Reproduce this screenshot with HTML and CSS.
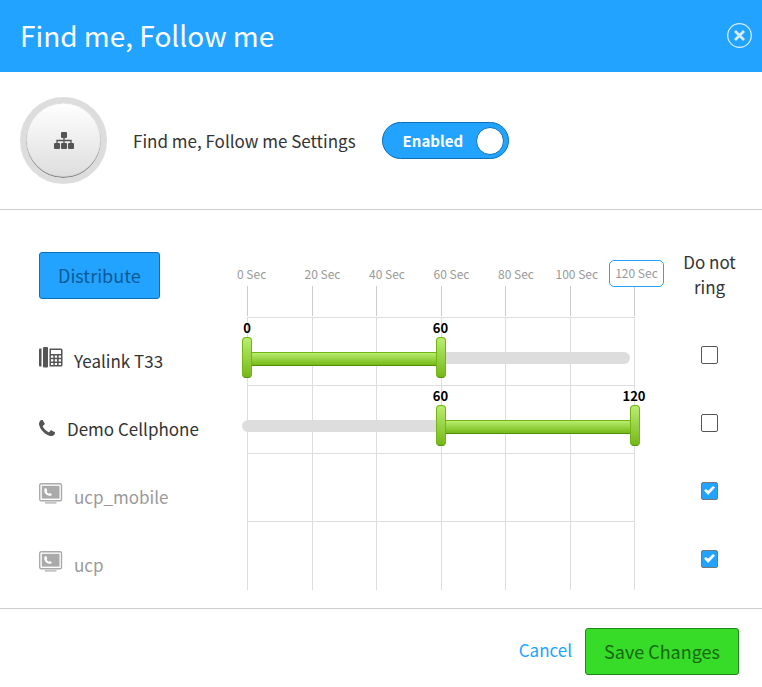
FILE: index.html
```html
<!DOCTYPE html>
<html lang="en">
<head>
<meta charset="utf-8">
<title>Find me, Follow me</title>
<link rel="stylesheet" href="styles.css">
</head>
<body>
<header class="header">
  <h1>Find me, Follow me</h1>
  <button class="close" type="button" aria-label="Close">
    <svg viewBox="0 0 25 25" width="25" height="25"><circle cx="12.500" cy="12.500" r="11.800" fill="none" stroke="#d5edff" stroke-width="1.300"/><path d="M8 8l9 9M17 8l-9 9" stroke="#d5edff" stroke-width="2.800"/></svg>
  </button>
</header>

<section class="settings">
  <div class="badge">
    <svg viewBox="0 0 20 17" width="20" height="17" fill="#555"><rect x="7" y="0" width="6" height="6" rx="1"/><rect x="0" y="11" width="6" height="6" rx="1"/><rect x="7" y="11" width="6" height="6" rx="1"/><rect x="14" y="11" width="6" height="6" rx="1"/><path d="M10 5v7M3 12V8.500h14V12" fill="none" stroke="#555" stroke-width="1.300"/></svg>
  </div>
  <span id="settings-label">Find me, Follow me Settings</span>
  <label class="toggle">
    <input type="checkbox" role="switch" checked aria-labelledby="settings-label">
    <span>Enabled</span>
    <i class="knob"></i>
  </label>
</section>

<main class="main">
  <table class="plan">
    <colgroup><col class="col-name"><col><col class="col-check"></colgroup>
    <thead>
      <tr>
        <th scope="col"><button class="btn btn-blue" type="button">Distribute</button></th>
        <th scope="col">
          <div class="scale">
            <span class="first">0 Sec</span><span>20 Sec</span><span>40 Sec</span><span>60 Sec</span><span>80 Sec</span><span class="wide">100 Sec</span><span class="end"><b>120 Sec</b></span>
          </div>
        </th>
        <th scope="col" class="check-head">Do not ring</th>
      </tr>
    </thead>
    <tbody>
      <tr>
        <th scope="row"><div class="name">
          <svg class="device" viewBox="0 0 24 21" width="24" height="21"><path d="M0 2.500Q0 1.500 1 1.500h1.500v18H1q-1 0-1-1z" fill="#555"/><rect x="4" y="0" width="5" height="20.500" rx="1" fill="#555"/><path d="M10.500 1.500H22q1.500 0 1.500 1.500v15q0 1.500-1.500 1.500H10.500z" fill="#555"/><path d="M12 3h10v4H12zM12 8.500h2.300v2.200H12zm3.800 0h2.300v2.200h-2.300zm3.900 0H22v2.200h-2.300zM12 12.200h2.300v2.200H12zm3.800 0h2.300v2.200h-2.300zm3.900 0H22v2.200h-2.300zM12 15.900h2.300v2.200H12zm3.800 0h2.300v2.200h-2.300zm3.900 0H22v2.200h-2.300z" fill="#fff"/></svg>
          <span>Yealink T33</span></div></th>
        <td><div class="track-cell">
          <i></i><i></i><i></i><i></i><i></i><i></i>
          <div class="rail"></div>
          <div class="fill" style="left:0%;width:50%"></div>
          <input type="range" min="0" max="120" value="0" aria-label="Yealink T33 start">
          <input type="range" min="0" max="120" value="60" aria-label="Yealink T33 end">
          <output style="left:0%">0</output><output style="left:50%">60</output>
        </div></td>
        <td class="check"><input type="checkbox" aria-label="Do not ring Yealink T33"></td>
      </tr>
      <tr>
        <th scope="row"><div class="name">
          <svg class="phone" viewBox="0 0 1408 1408" width="16" height="16" fill="#555"><path d="M1408 1112q0 27-10 70.500t-21 68.500q-21 50-122 106-94 51-186 51-27 0-53-3.500t-57.500-12.500-47-14.500T856 1357t-49-18q-98-35-175-83-127-79-264-216T152 776q-48-77-83-175-3-9-18-49t-20.500-55.500-14.500-47T3.500 392 0 339q0-92 51-186Q107 52 157 31q25-11 68.500-21T296 0q14 0 21 3 18 6 53 76 11 19 30 54t35 63.500 31 53.500q3 4 17.500 25t21.500 35.500 7 28.500q0 20-28.500 50t-62 55-62 53-28.500 46q0 9 5 22.500t8.500 20.500 14 24 11.500 19q76 137 174 235t235 174q2 1 19 11.500t24 14 20.500 8.500 22.500 5q18 0 46-28.500t53-62 55-62 50-28.500q14 0 28.500 7t35.500 21.500 25 17.500q25 15 53.500 31t63.500 35 54 30q70 35 76 53 3 7 3 21z"/></svg>
          <span>Demo Cellphone</span></div></th>
        <td><div class="track-cell">
          <i></i><i></i><i></i><i></i><i></i><i></i>
          <div class="rail"></div>
          <div class="fill" style="left:50%;width:50%"></div>
          <input type="range" min="0" max="120" value="60" aria-label="Demo Cellphone start">
          <input type="range" min="0" max="120" value="120" aria-label="Demo Cellphone end">
          <output style="left:50%">60</output><output style="left:100%">120</output>
        </div></td>
        <td class="check"><input type="checkbox" aria-label="Do not ring Demo Cellphone"></td>
      </tr>
      <tr class="off">
        <th scope="row"><div class="name">
          <svg class="device" viewBox="0 0 24 21" width="24" height="21"><rect x=".7" y=".7" width="21.800" height="17" rx="1.500" fill="#fff" stroke="#aaa" stroke-width="1.400"/><rect x="2.800" y="2.800" width="17.700" height="12.800" fill="#aaa"/><rect x="6" y="19.300" width="11.500" height="1.200" fill="#aaa"/><path d="M5.500 5.500q-1 4 2 6.300 2.600 1.600 5 .7l.2-1.500-2-1-1.200.8q-1.300-.6-1.900-2.200l.7-.9-.9-2.500z" fill="#fff"/></svg>
          <span>ucp_mobile</span></div></th>
        <td><div class="track-cell"><i></i><i></i><i></i><i></i><i></i><i></i></div></td>
        <td class="check"><input type="checkbox" checked aria-label="Do not ring ucp_mobile"></td>
      </tr>
      <tr class="off">
        <th scope="row"><div class="name">
          <svg class="device" viewBox="0 0 24 21" width="24" height="21"><rect x=".7" y=".7" width="21.800" height="17" rx="1.500" fill="#fff" stroke="#aaa" stroke-width="1.400"/><rect x="2.800" y="2.800" width="17.700" height="12.800" fill="#aaa"/><rect x="6" y="19.300" width="11.500" height="1.200" fill="#aaa"/><path d="M5.500 5.500q-1 4 2 6.300 2.600 1.600 5 .7l.2-1.500-2-1-1.200.8q-1.300-.6-1.900-2.200l.7-.9-.9-2.500z" fill="#fff"/></svg>
          <span>ucp</span></div></th>
        <td><div class="track-cell"><i></i><i></i><i></i><i></i><i></i><i></i></div></td>
        <td class="check"><input type="checkbox" checked aria-label="Do not ring ucp"></td>
      </tr>
    </tbody>
  </table>
</main>

<footer class="footer">
  <a href="#cancel">Cancel</a>
  <button class="btn btn-green" type="submit">Save Changes</button>
</footer>
</body>
</html>
```
FILE: styles.css
```css
* { box-sizing: border-box; }

body {
  margin: 0;
  background: #fff;
  color: #333;
  font: 17px/25px "Noto Sans CJK SC", "Noto Sans", sans-serif;
}

button, input { font: inherit; }
svg { display: block; }

.header {
  display: flex;
  align-items: center;
  justify-content: space-between;
  height: 72px;
  padding: 0 10px 2px 20px;
  background: #22a3ff;
  color: #fff;
}

.header h1 {
  margin: 0;
  font-size: 28px;
  line-height: 40px;
  font-weight: 400;
}

.close {
  padding: 0;
  border: 0;
  background: none;
  cursor: pointer;
}

.settings {
  display: flex;
  align-items: center;
  gap: 26px;
  padding: 25px 20px;
  border-bottom: 1px solid #ccc;
}

.badge {
  display: grid;
  place-items: center;
  width: 87px;
  height: 87px;
  border: 6px solid #ddd;
  border-radius: 50%;
  background: linear-gradient(#fff, #ddd) padding-box;
  box-shadow: inset 0 -1px 1px #777, inset 0 0 1px #999;
}

.toggle {
  position: relative;
  display: flex;
  align-items: center;
  justify-content: space-between;
  width: 127px;
  height: 37px;
  padding: 0 4px 0 20px;
  border: 1px solid #0a70bb;
  border-radius: 19px;
  background: #22a3ff;
  color: #fff;
  font-size: 15px;
  font-weight: 700;
  cursor: pointer;
}

.toggle input {
  position: absolute;
  inset: 0;
  margin: 0;
  opacity: 0;
}

.knob {
  width: 28px;
  height: 28px;
  border: 1px solid #0a70bb;
  border-radius: 50%;
  background: #fff;
}

.main {
  padding: 39px 0 18px 39px;
  border-bottom: 1px solid #ccc;
}

.plan {
  width: 100%;
  table-layout: fixed;
  border-collapse: collapse;
}

.col-name { width: 208px; }
.col-check { width: 127px; }

.plan th, .plan td {
  padding: 0;
  font-weight: 400;
  text-align: left;
  vertical-align: top;
}

.plan thead tr { height: 68px; }
.plan thead .btn { margin-top: 3px; }

.plan .check-head, .plan .check {
  padding-left: 22px;
  text-align: center;
}

.plan .check-head { padding-right: 20px; padding-left: 42px; }

.btn {
  height: 47px;
  padding: 0 18px;
  border: 1px solid;
  border-radius: 3px;
  font-size: 18px;
  cursor: pointer;
}

.btn-blue {
  border-color: #0a70bb;
  background: #22a3ff;
  color: #0b5a94;
}

.btn-green {
  border-color: #1f8716;
  background: #36dc27;
  color: #196811;
}

.scale {
  display: flex;
  height: 67px;
  padding-top: 13px;
  margin-right: 1px;
  color: #999;
  font-size: 12px;
  line-height: 24px;
  white-space: nowrap;
}

.scale span {
  flex: 1 1 0;
  width: 0;
  text-indent: -7px;
}

.scale span::after {
  content: "";
  display: block;
  width: 1px;
  height: 30px;
  background: #ccc;
}

.scale .first { text-indent: -10px; }
.scale .wide { text-indent: -14px; }
.scale .end { flex: 0 0 0; }

.scale b {
  position: relative;
  display: block;
  width: 55px;
  height: 27px;
  margin: -2px 0 -1px -25px;
  border: 1px solid #22a3ff;
  border-radius: 5px;
  background: #fff;
  font-weight: 400;
  text-align: center;
  text-indent: 0;
}

.name {
  display: flex;
  align-items: flex-start;
  gap: 11px;
  padding-top: 31px;
}

.device { margin-top: -1px; }
.phone { margin: 4px 1px 0 0; }
.off .name { color: #999; }

.track-cell {
  position: relative;
  display: flex;
  height: 68px;
  border-top: 1px solid #ddd;
  border-right: 1px solid #ddd;
}

.plan tr:last-child .track-cell { height: 69px; }

.track-cell i {
  flex: 1;
  border-left: 1px solid #ddd;
}

.rail {
  position: absolute;
  top: 34px;
  left: -5px;
  width: calc(100% + 1px);
  height: 12px;
  border-radius: 6px;
  background: #ddd;
}

.fill {
  position: absolute;
  top: 34px;
  height: 14px;
  border: 1px solid #72b515;
  border-bottom-color: #549006;
  background: linear-gradient(#b9ed70, #76b918);
}

.track-cell input {
  position: absolute;
  top: 19px;
  left: -5px;
  width: calc(100% + 11px);
  height: 41px;
  margin: 0;
  appearance: none;
  background: none;
  pointer-events: none;
}

.track-cell input::-webkit-slider-thumb {
  width: 10px;
  height: 41px;
  border: 1px solid #72b515;
  border-bottom-color: #549006;
  border-radius: 4px;
  appearance: none;
  background: linear-gradient(#b9ed70, #76b918);
  pointer-events: auto;
}

.track-cell output {
  position: absolute;
  top: 0;
  width: 40px;
  margin-left: -20px;
  color: #000;
  font-size: 13px;
  line-height: 20px;
  font-weight: 700;
  text-align: center;
}

.check input {
  display: flex;
  width: 17px;
  height: 18px;
  margin: 29px auto 0;
  border: 1px solid #555;
  border-radius: 2px;
  appearance: none;
  background: #fff;
}

.check input:checked {
  border-color: #777;
  background: #22a3ff;
}

.check input:checked::before {
  content: "";
  width: 11px;
  height: 9px;
  margin: 3px 2px;
  background: #fff;
  clip-path: polygon(0 50%, 18% 32%, 38% 54%, 82% 0, 100% 18%, 38% 100%);
}

.footer {
  display: flex;
  align-items: flex-start;
  justify-content: flex-end;
  gap: 13px;
  padding: 19px 23px 12px;
}

.footer a {
  margin-top: 9px;
  color: #22a3ff;
  text-decoration: none;
}
```
